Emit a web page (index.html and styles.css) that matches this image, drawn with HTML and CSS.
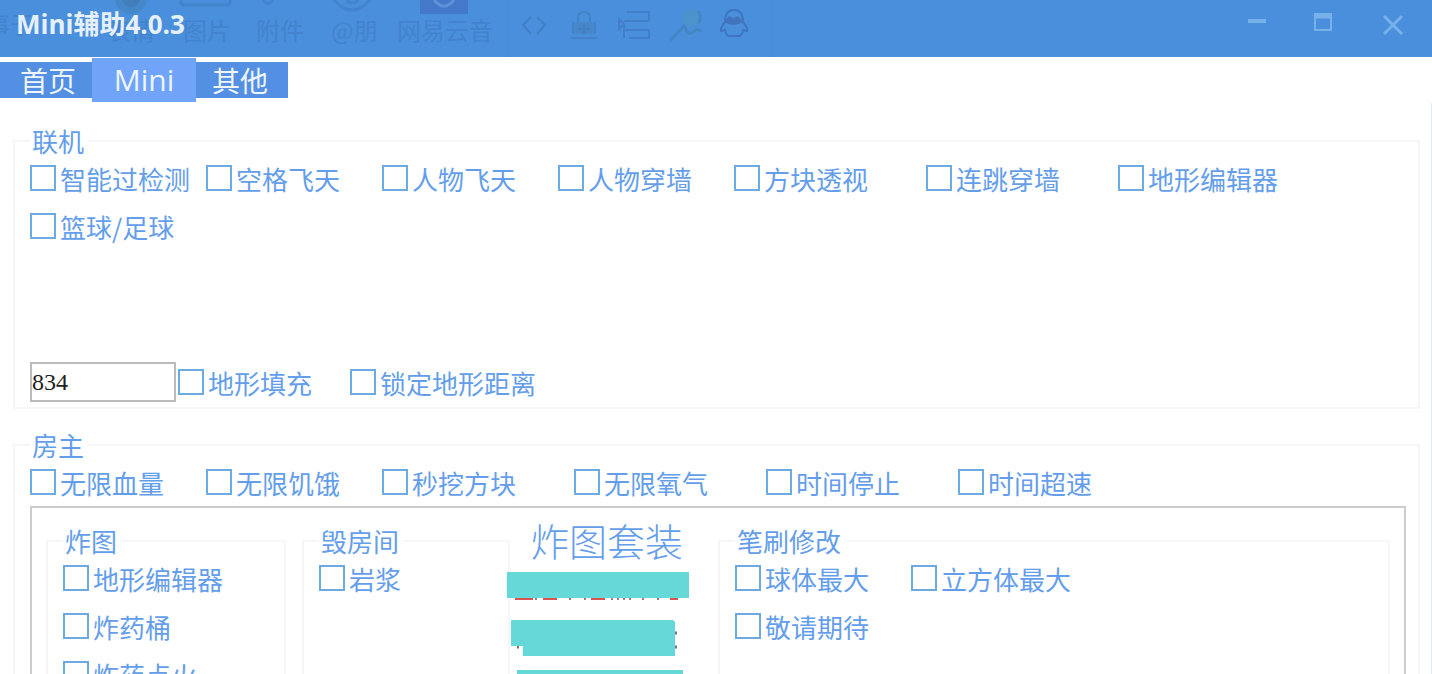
FILE: index.html
```html
<!DOCTYPE html>
<html lang="zh-CN">
<head>
    <meta charset="UTF-8">
    <meta name="viewport" content="width=device-width, initial-scale=1.0">
    <title>Mini辅助4.0.3</title>
    <link rel="stylesheet" href="styles.css">
</head>
<body>
    <header class="title-bar">
        <!-- toolbar of the window behind, seen through the title bar -->
        <svg class="behind" width="780" height="57" viewBox="0 0 780 57" aria-hidden="true">
            <circle cx="131" cy="-2" r="16" fill="#4687c9"/>
            <circle cx="131" cy="-2" r="9" fill="#417eba"/>
            <path d="M181 0v2q0 3 3 3h43q3 0 3-3V0" fill="none" stroke="#4384cd" stroke-width="3"/>
            <path d="M263 0q5 7 10 0M334 0q18 20 36 0M346 0q7 6 12 0" fill="none" stroke="#4384cd" stroke-width="3"/>
            <rect x="420" y="-4" width="48" height="18" fill="#4379c8"/>
            <path d="M434 0q10 12 20 0" fill="none" stroke="#5c92d8" stroke-width="3"/>
            <g class="behind-text">
                <text x="-14" y="34">事于</text>
                <text x="107" y="40">表情</text>
                <text x="183" y="40">图片</text>
                <text x="256" y="40">附件</text>
                <text x="331" y="40">@朋</text>
                <text x="397" y="40">网易云音</text>
            </g>
            <path d="M507 0v57M771 0v57" stroke="#4b8cd6"/>
            <path d="M531 17l-8 8 8 9M537 17l8 8-8 9" fill="none" stroke="#417fc6" stroke-width="2"/>
            <path d="M573 22h22v12h-22z" fill="#4788cb"/>
            <path d="M573 22v12M595 22v12M571 38h26M578 22v-4q0-6 6-6t6 6v4" fill="none" stroke="#4383c8" stroke-width="2"/>
            <path d="M578 29h12M584 24v10" stroke="#4180c3" stroke-width="2"/>
            <path d="M619 19v10l5-5zM624 24v14M624 21h25M649 11v10M627 12h22M624 30h25v8h-20" fill="none" stroke="#437fc9" stroke-width="2"/>
            <circle cx="691" cy="18" r="9" fill="#4c92cc"/>
            <path d="M685 25l-15 16M684 25q4 12 9 7t8 0M698 11q4 4 1 12" fill="none" stroke="#4486c4" stroke-width="3"/>
            <path d="M725 22q0-12 9-12t9 12q5 6 4 9l-4-1q0 3-3 6h-12q-3-3-3-6l-4 1q-1-3 4-9z" fill="none" stroke="#3f75c0" stroke-width="2"/>
            <path d="M724 22l5-6 5 2 4-2 5 6q-9 6-19 0z" fill="#4274bd"/>
        </svg>
        <h1>Mini辅助4.0.3</h1>
        <div class="window-buttons">
            <button type="button" aria-label="最小化">
                <svg width="22" height="22" viewBox="0 0 22 22"><path d="M2 10h18" stroke-width="4"/></svg>
            </button>
            <button type="button" aria-label="最大化">
                <svg width="22" height="22" viewBox="0 0 22 22"><path d="M3 3h16v16H3z" stroke-width="2"/><path d="M2 5h18" stroke-width="5"/></svg>
            </button>
            <button type="button" aria-label="关闭">
                <svg width="22" height="22" viewBox="0 0 22 22"><path d="M2 5l18 18M20 5L2 23" stroke-width="3"/></svg>
            </button>
        </div>
    </header>

    <nav class="tabs">
        <button type="button">首页</button>
        <button type="button" class="active">Mini</button>
        <button type="button">其他</button>
    </nav>

    <main>
        <fieldset class="group">
            <legend>联机</legend>
            <div class="options online">
                <label><input type="checkbox">智能过检测</label>
                <label><input type="checkbox">空格飞天</label>
                <label><input type="checkbox">人物飞天</label>
                <label><input type="checkbox">人物穿墙</label>
                <label><input type="checkbox">方块透视</label>
                <label><input type="checkbox">连跳穿墙</label>
                <label><input type="checkbox">地形编辑器</label>
                <label><input type="checkbox">篮球/足球</label>
            </div>
            <div class="terrain">
                <input type="text" value="834" aria-label="地形">
                <label><input type="checkbox">地形填充</label>
                <label><input type="checkbox">锁定地形距离</label>
            </div>
        </fieldset>

        <fieldset class="group">
            <legend>房主</legend>
            <div class="options host">
                <label><input type="checkbox">无限血量</label>
                <label><input type="checkbox">无限饥饿</label>
                <label><input type="checkbox">秒挖方块</label>
                <label><input type="checkbox">无限氧气</label>
                <label><input type="checkbox">时间停止</label>
                <label><input type="checkbox">时间超速</label>
            </div>

            <div class="panel">
                <fieldset class="group">
                    <legend>炸图</legend>
                    <div class="options">
                        <label><input type="checkbox">地形编辑器</label>
                        <label><input type="checkbox">炸药桶</label>
                        <label><input type="checkbox">炸药点火</label>
                    </div>
                </fieldset>

                <fieldset class="group">
                    <legend>毁房间</legend>
                    <div class="options">
                        <label><input type="checkbox">岩浆</label>
                    </div>
                </fieldset>

                <section class="kit">
                    <h2>炸图套装</h2>
                    <svg width="184" height="120" viewBox="0 0 184 120" aria-hidden="true">
                        <path d="M8 26h18M36 26h14M84 26h14M163 26h8" stroke="#d9534f" stroke-width="4"/>
                        <path d="M28 27h2M62 27h2M77 27h2M104 27h2M110 27h2M116 27h2M122 27h2M135 27h2M150 27h2" stroke="#a77" stroke-width="2"/>
                        <path d="M168 61h2M168 75h2M10 75h2" stroke="#777" stroke-width="3"/>
                        <path d="M0 0h182v26H0zM4 48h162l2 2v34H16V74H4zM10 98h166v22H10z" fill="#65d9d7"/>
                    </svg>
                </section>

                <fieldset class="group">
                    <legend>笔刷修改</legend>
                    <div class="options brush">
                        <label><input type="checkbox">球体最大</label>
                        <label><input type="checkbox">立方体最大</label>
                        <label><input type="checkbox">敬请期待</label>
                    </div>
                </fieldset>
            </div>
        </fieldset>
    </main>
</body>
</html>
```

FILE: styles.css
```css
:root {
    --title-color: #4a8fdb;
    --tab-color: #538fe2;
    --tab-active: #6fa4f8;
    --text-color: #649eea;
    --box-color: #6babe2;
    --line-color: #f6f6f6;
}

* {
    box-sizing: border-box;
}

body {
    margin: 0;
    height: 100vh;
    overflow: hidden;
    font-family: "Noto Sans CJK SC", sans-serif;
    font-size: 26px;
    color: var(--text-color);
    background: #fff;
}

button {
    border: none;
    padding: 0;
    font: inherit;
    cursor: pointer;
}

.title-bar {
    position: relative;
    display: flex;
    justify-content: space-between;
    height: 57px;
    padding: 0 28px 0 16px;
    background: var(--title-color);
}

.title-bar h1 {
    position: relative;
    margin: 0;
    font-family: "Open Sans", "Noto Sans CJK SC", sans-serif;
    font-size: 26px;
    line-height: 48px;
    color: #e6f0fc;
}

.behind {
    position: absolute;
    left: 0;
    top: 0;
}

.behind-text {
    font-size: 24px;
    fill: #4383cd;
}

.window-buttons {
    display: flex;
    align-items: flex-start;
    gap: 48px;
    padding-top: 10px;
}

.window-buttons button {
    height: 24px;
    background: none;
}

.window-buttons button:first-child {
    margin-right: -4px;
}

.window-buttons svg {
    display: block;
    overflow: visible;
    fill: none;
    stroke: #78b0ea;
}

.tabs {
    display: flex;
    align-items: center;
    height: 46px;
}

.tabs button {
    width: 92px;
    height: 36px;
    font-size: 28px;
    line-height: 36px;
    color: #eef5fd;
    background: var(--tab-color);
}

.tabs button:first-child {
    padding-left: 4px;
}

.tabs button:last-child {
    padding-right: 4px;
}

.tabs .active {
    width: 104px;
    height: 44px;
    font-family: "Open Sans", sans-serif;
    font-size: 30px;
    background: var(--tab-active);
}

main {
    display: flex;
    flex-direction: column;
    gap: 22px;
    min-height: calc(100vh - 103px);
    padding: 24px 11px 0 13px;
    border-right: 1px solid #dcebf2;
}

.group {
    min-width: 0;
    margin: 0;
    padding: 0 12px 2px 15px;
    border: 2px solid var(--line-color);
}

.group legend {
    padding: 0 4px 0 2px;
    line-height: 28px;
}

.options {
    display: grid;
    grid-auto-rows: 46px;
    row-gap: 2px;
}

.options label,
.terrain label {
    display: flex;
    align-items: center;
    gap: 4px;
    white-space: nowrap;
}

input[type="checkbox"] {
    appearance: none;
    flex: none;
    width: 26px;
    height: 26px;
    margin: 0;
    border: 2px solid var(--box-color);
    background: #fff;
}

input[type="checkbox"]:checked {
    background: var(--box-color);
}

.online {
    grid-template-columns: repeat(4, 176px) repeat(2, 192px) 1fr;
    min-height: 204px;
    align-content: start;
}

.host {
    grid-template-columns: repeat(2, 176px) repeat(3, 192px) 1fr;
}

.brush {
    grid-template-columns: 176px 1fr;
}

.terrain {
    display: flex;
    align-items: center;
    height: 46px;
}

.terrain input[type="text"] {
    width: 146px;
    height: 40px;
    margin-right: 2px;
    padding: 0;
    border: 2px solid #bbb;
    font-family: "Liberation Serif", serif;
    font-size: 24px;
    color: #222;
}

.terrain label {
    min-width: 172px;
}

.panel {
    display: grid;
    grid-template-columns: 240px 208px 176px 1fr;
    gap: 16px;
    min-height: 240px;
    margin-top: 1px;
    padding: 19px 14px 14px;
    border: 2px solid #ccc;
}

.kit {
    display: flex;
    flex-direction: column;
    align-items: center;
    margin: -10px 0 0 -30px;
}

.kit h2 {
    margin: 0 0 9px 16px;
    font-size: 38px;
    font-weight: 300;
    line-height: 46px;
}

.kit svg {
    flex: none;
}
```
